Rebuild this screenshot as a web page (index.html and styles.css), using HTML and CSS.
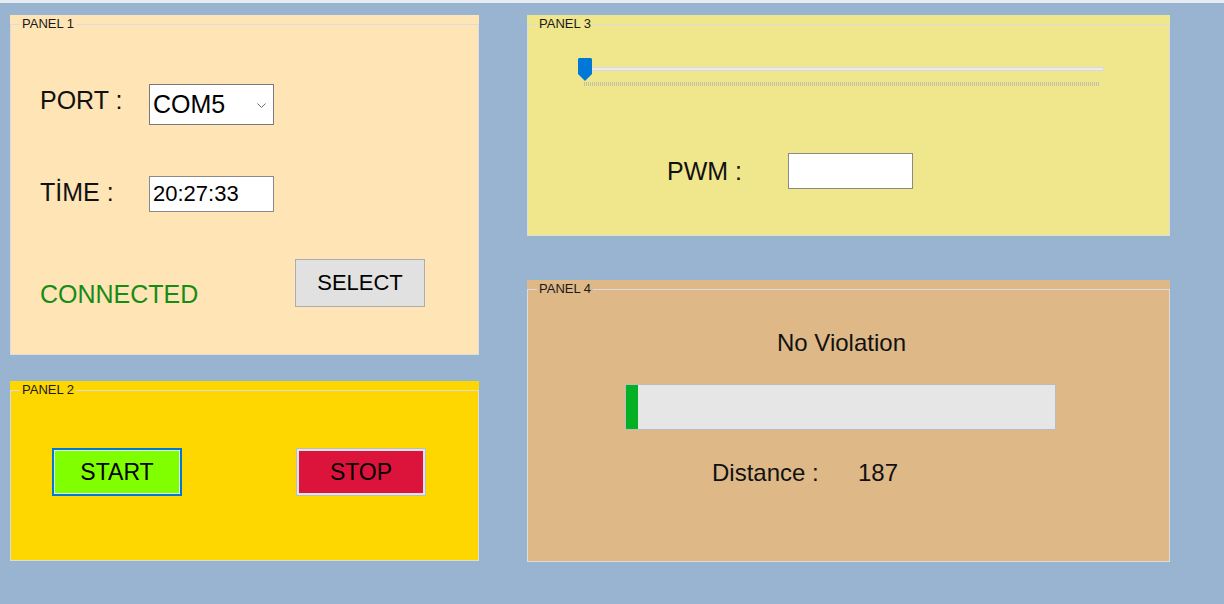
FILE: index.html
```html
<!DOCTYPE html>
<html lang="tr">
<head>
<meta charset="utf-8">
<title>Panels</title>
<link rel="stylesheet" href="styles.css">
</head>
<body>
<div class="app">
  <div class="col col-left">
    <div class="panel panel-1">
      <fieldset class="group">
        <legend>PANEL 1</legend>
        <div class="content p1-content">
          <div class="row row-port">
            <span class="label lbl-port">PORT :</span>
            <div class="combo">
              <span class="combo-text">COM5</span>
              <svg class="chevron" width="9" height="5" viewBox="0 0 9 5"><polyline points="0.5,0.5 4.5,4.5 8.5,0.5" fill="none" stroke="#6a6a6a" stroke-width="1"/></svg>
            </div>
          </div>
          <div class="row row-time">
            <span class="label lbl-port">TİME :</span>
            <div class="textbox time-box">20:27:33</div>
          </div>
          <div class="row row-status">
            <span class="label status">CONNECTED</span>
            <button class="btn btn-select">SELECT</button>
          </div>
        </div>
      </fieldset>
    </div>
    <div class="panel panel-2">
      <fieldset class="group">
        <legend>PANEL 2</legend>
        <div class="content p2-content">
          <button class="btn btn-start">START</button>
          <button class="btn btn-stop">STOP</button>
        </div>
      </fieldset>
    </div>
  </div>
  <div class="col col-right">
    <div class="panel panel-3">
      <fieldset class="group">
        <legend>PANEL 3</legend>
        <div class="content p3-content">
          <div class="slider">
            <div class="track"></div>
            <div class="ticks"></div>
            <svg class="thumb" width="14" height="23" viewBox="0 0 14 23"><polygon points="0,1 1,0 13,0 14,1 14,16 7,23 0,16" fill="#0078d7"/></svg>
          </div>
          <div class="row row-pwm">
            <span class="label lbl-pwm">PWM :</span>
            <div class="textbox pwm-box"></div>
          </div>
        </div>
      </fieldset>
    </div>
    <div class="panel panel-4">
      <fieldset class="group">
        <legend>PANEL 4</legend>
        <div class="content p4-content">
          <div class="violation">No Violation</div>
          <div class="progress"><div class="progress-fill" style="width: 12px"></div></div>
          <div class="row row-distance">
            <span class="label lbl-distance">Distance :</span>
            <span class="label distance-value">187</span>
          </div>
        </div>
      </fieldset>
    </div>
  </div>
</div>
</body>
</html>
```

FILE: styles.css
```css
* { box-sizing: border-box; }

html, body {
  margin: 0;
  padding: 0;
}

body {
  width: 1224px;
  height: 604px;
  background: #99b4d1;
  font-family: "Liberation Sans", Arial, sans-serif;
  color: #111;
  overflow: hidden;
}

.app {
  border-top: 3px solid #e7ecf2;
  display: grid;
  grid-template-columns: 469px 643px;
  column-gap: 48px;
  padding: 12px 0 0 10px;
  align-items: start;
}

.col {
  display: flex;
  flex-direction: column;
}

.col-left { gap: 26px; }
.col-right { gap: 44px; }

.panel {
  display: flex;
}

.panel-1 { height: 340px; background: #ffe4b5; }
.panel-2 { height: 180px; background: #ffd700; }
.panel-3 { height: 221px; background: #f0e68c; }
.panel-4 { height: 282px; background: #deb887; }

.group {
  flex: 1;
  margin: 0;
  padding: 0;
  min-width: 0;
  border: 1px solid #dcdcdc;
}

.group legend {
  margin-left: 9px;
  padding: 0 2px;
  font-size: 13px;
  line-height: 18px;
  color: #1a1a1a;
}

.label {
  font-size: 25px;
  line-height: 25px;
  color: #111;
  white-space: nowrap;
}

.row {
  display: flex;
}

/* Panel 1 */
.p1-content {
  padding-left: 29px;
}

.row-port {
  margin-top: 51px;
  align-items: flex-start;
}

.row-time {
  margin-top: 51px;
  align-items: flex-start;
}

.lbl-port {
  width: 109px;
  margin-top: 4px;
}

.combo {
  width: 125px;
  height: 41px;
  border: 1px solid #7a7a7a;
  background: #fff;
  display: flex;
  align-items: center;
  padding-left: 3px;
}

.combo-text {
  font-size: 25px;
  line-height: 25px;
  color: #000;
}

.chevron {
  margin-left: auto;
  margin-right: 7px;
  margin-top: 1px;
}

.textbox {
  border: 1px solid #8a8a8a;
  background: #fff;
  display: flex;
  align-items: center;
}

.time-box {
  width: 125px;
  height: 36px;
  padding-left: 3px;
  font-size: 22px;
  line-height: 22px;
  color: #000;
}

.row-status {
  margin-top: 47px;
  align-items: flex-end;
}

.status {
  width: 255px;
  color: #168c16;
}

.btn {
  font-family: "Liberation Sans", Arial, sans-serif;
  width: 130px;
  height: 48px;
  padding: 0;
  margin: 0;
  color: #000;
  display: flex;
  align-items: center;
  justify-content: center;
}

.btn-select {
  font-size: 22px;
  background: #e1e1e1;
  border: 1px solid #adadad;
}

/* Panel 2 */
.p2-content {
  display: flex;
  margin-top: 49px;
  padding-left: 41px;
  gap: 114px;
}

.btn-start {
  font-size: 23px;
  background: #7fff00;
  border: 2px solid #0078d7;
  box-shadow: inset 0 0 0 1px #e2f3d8;
}

.btn-stop {
  font-size: 23px;
  background: #dc143c;
  border: 1px solid #bdbdbd;
  box-shadow: inset 0 0 0 2px #e3e3e3;
}

/* Panel 3 */
.slider {
  position: relative;
  margin-top: 25px;
  margin-left: 50px;
  width: 526px;
  height: 30px;
  padding-top: 9px;
}

.track {
  margin-left: 6px;
  width: 520px;
  height: 4px;
  border: 1px solid #dadada;
  background: #e8ebeb;
}

.ticks {
  margin-top: 11px;
  margin-left: 6px;
  width: 515px;
  height: 4px;
  background: repeating-linear-gradient(90deg, #c3bfa4 0 1px, transparent 1px 2px);
}

.thumb {
  position: absolute;
  left: 0;
  top: 0;
}

.row-pwm {
  margin-top: 65px;
  margin-left: 139px;
  align-items: center;
}

.lbl-pwm {
  width: 121px;
}

.pwm-box {
  width: 125px;
  height: 36px;
}

/* Panel 4 */
.violation {
  margin-top: 33px;
  margin-left: 249px;
  font-size: 24px;
  line-height: 24px;
  color: #111;
}

.progress {
  margin-top: 29px;
  margin-left: 97px;
  width: 431px;
  height: 46px;
  border: 1px solid #bcbcbc;
  background: #e6e6e6;
}

.progress-fill {
  height: 100%;
  background: #06b025;
}

.row-distance {
  margin-top: 31px;
  margin-left: 184px;
}

.lbl-distance,
.distance-value {
  font-size: 24px;
  line-height: 24px;
}

.lbl-distance {
  width: 146px;
}
```
